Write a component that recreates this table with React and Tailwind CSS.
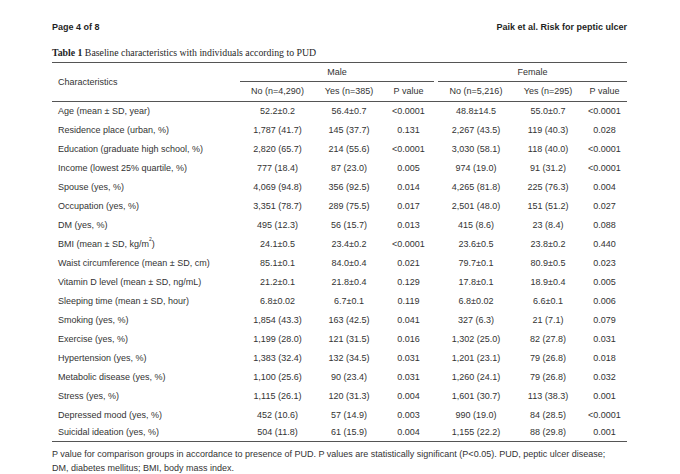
import React from "react";

const rows = [
  ["Age (mean ± SD, year)", "52.2±0.2", "56.4±0.7", "<0.0001", "48.8±14.5", "55.0±0.7", "<0.0001"],
  ["Residence place (urban, %)", "1,787 (41.7)", "145 (37.7)", "0.131", "2,267 (43.5)", "119 (40.3)", "0.028"],
  ["Education (graduate high school, %)", "2,820 (65.7)", "214 (55.6)", "<0.0001", "3,030 (58.1)", "118 (40.0)", "<0.0001"],
  ["Income (lowest 25% quartile, %)", "777 (18.4)", "87 (23.0)", "0.005", "974 (19.0)", "91 (31.2)", "<0.0001"],
  ["Spouse (yes, %)", "4,069 (94.8)", "356 (92.5)", "0.014", "4,265 (81.8)", "225 (76.3)", "0.004"],
  ["Occupation (yes, %)", "3,351 (78.7)", "289 (75.5)", "0.017", "2,501 (48.0)", "151 (51.2)", "0.027"],
  ["DM (yes, %)", "495 (12.3)", "56 (15.7)", "0.013", "415 (8.6)", "23 (8.4)", "0.088"],
  ["BMI", "24.1±0.5", "23.4±0.2", "<0.0001", "23.6±0.5", "23.8±0.2", "0.440"],
  ["Waist circumference (mean ± SD, cm)", "85.1±0.1", "84.0±0.4", "0.021", "79.7±0.1", "80.9±0.5", "0.023"],
  ["Vitamin D level (mean ± SD, ng/mL)", "21.2±0.1", "21.8±0.4", "0.129", "17.8±0.1", "18.9±0.4", "0.005"],
  ["Sleeping time (mean ± SD, hour)", "6.8±0.02", "6.7±0.1", "0.119", "6.8±0.02", "6.6±0.1", "0.006"],
  ["Smoking (yes, %)", "1,854 (43.3)", "163 (42.5)", "0.041", "327 (6.3)", "21 (7.1)", "0.079"],
  ["Exercise (yes, %)", "1,199 (28.0)", "121 (31.5)", "0.016", "1,302 (25.0)", "82 (27.8)", "0.031"],
  ["Hypertension (yes, %)", "1,383 (32.4)", "132 (34.5)", "0.031", "1,201 (23.1)", "79 (26.8)", "0.018"],
  ["Metabolic disease (yes, %)", "1,100 (25.6)", "90 (23.4)", "0.031", "1,260 (24.1)", "79 (26.8)", "0.032"],
  ["Stress (yes, %)", "1,115 (26.1)", "120 (31.3)", "0.004", "1,601 (30.7)", "113 (38.3)", "0.001"],
  ["Depressed mood (yes, %)", "452 (10.6)", "57 (14.9)", "0.003", "990 (19.0)", "84 (28.5)", "<0.0001"],
  ["Suicidal ideation (yes, %)", "504 (11.8)", "61 (15.9)", "0.004", "1,155 (22.2)", "88 (29.8)", "0.001"],
];

const cols = "grid grid-cols-[188px_75px_68px_51px_4px_76px_68px_45px]";

function Label({ text }) {
  if (text === "BMI") {
    return (
      <span>
        BMI (mean ± SD, kg/m<sup className="text-[5px] -top-[1.2em]">2</sup>)
      </span>
    );
  }
  return <span>{text}</span>;
}

export default function App() {
  return (
    <div
      className="w-[680px] h-[474px] bg-white pt-[22px] px-[52px] text-[#333]"
      style={{ fontFamily: '"Liberation Sans", Arial, sans-serif' }}
    >
      <div className="flex justify-between text-[9px] leading-[11px] font-bold text-[#1f1f1f] w-[575px]">
        <span>Page 4 of 8</span>
        <span>Paik et al. Risk for peptic ulcer</span>
      </div>
      <div
        className="mt-[14px] text-[9.8px] leading-[12px] text-[#1f1f1f]"
        style={{ fontFamily: '"Liberation Serif", "Times New Roman", serif' }}
      >
        <span className="font-bold">Table 1</span> Baseline characteristics with individuals according to PUD
      </div>
      <div className="mt-[3px] w-[575px] border-t border-[#555] text-[9px] leading-[11px]">
        <div className={`${cols} grid-rows-[19px_19px] border-b border-[#555]`}>
          <div className="row-span-2 flex items-center pl-[6px]">Characteristics</div>
          <div className="col-span-3 flex items-center justify-center border-b border-[#555]">Male</div>
          <div className="row-span-2" />
          <div className="col-span-3 flex items-center justify-center border-b border-[#555]">Female</div>
          <div className="flex items-center justify-center">No (n=4,290)</div>
          <div className="flex items-center justify-center">Yes (n=385)</div>
          <div className="flex items-center justify-center">P value</div>
          <div className="flex items-center justify-center">No (n=5,216)</div>
          <div className="flex items-center justify-center">Yes (n=295)</div>
          <div className="flex items-center justify-center">P value</div>
        </div>
        <div className="border-b border-[#555]">
          {rows.map((r, i) => (
            <div
              key={i}
              className={`${cols} ${i === rows.length - 1 ? "h-[16px] pt-[2px]" : "h-[19px] items-center"}`}
            >
              <div className="pl-[6px] whitespace-nowrap">
                <Label text={r[0]} />
              </div>
              <div className="text-center">{r[1]}</div>
              <div className="text-center">{r[2]}</div>
              <div className="text-center">{r[3]}</div>
              <div />
              <div className="text-center">{r[4]}</div>
              <div className="text-center">{r[5]}</div>
              <div className="text-center">{r[6]}</div>
            </div>
          ))}
        </div>
        <div className="mt-[5px] leading-[14px] whitespace-nowrap">
          P value for comparison groups in accordance to presence of PUD. P values are statistically significant (P&lt;0.05). PUD, peptic ulcer disease;
          <br />
          DM, diabetes mellitus; BMI, body mass index.
        </div>
      </div>
    </div>
  );
}
